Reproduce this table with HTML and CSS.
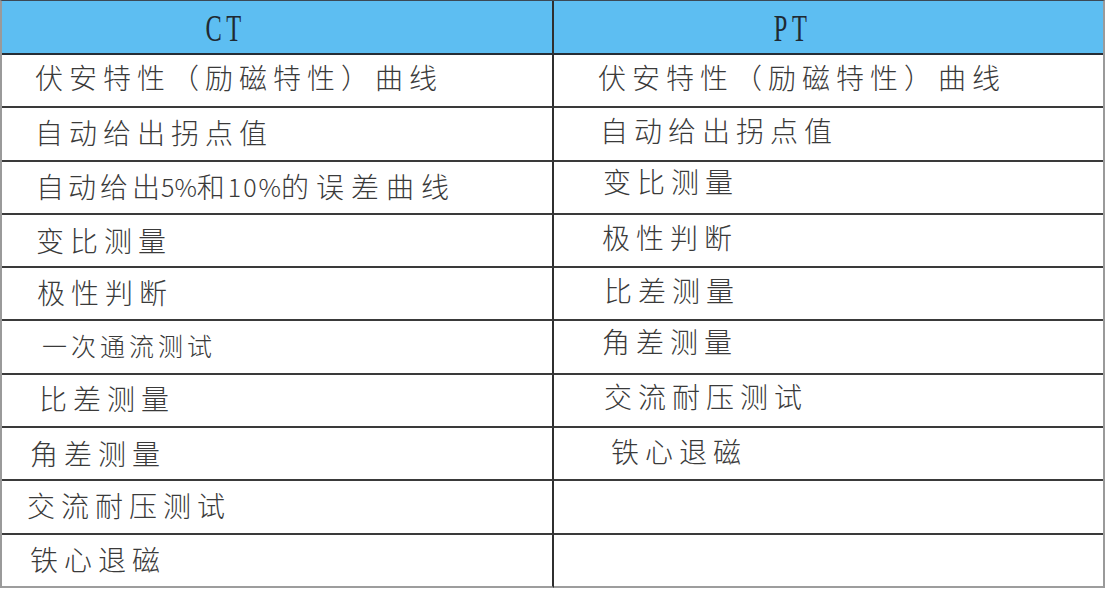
FILE: index.html
```html
<!DOCTYPE html>
<html lang="zh-CN">
<head>
<meta charset="utf-8">
<title>CT / PT 功能对照表</title>
<link rel="stylesheet" href="styles.css">
</head>
<body>
<div class="table">
  <div class="cell head l"><span class="head-text">CT</span></div>
  <div class="cell head r pt"><span class="head-text">PT</span></div>

  <div class="cell l in-33 up-2">伏安特性（励磁特性）曲线</div>
  <div class="cell r in-44">伏安特性（励磁特性）曲线</div>

  <div class="cell l in-33">自动给出拐点值</div>
  <div class="cell r in-46">自动给出拐点值</div>

  <div class="cell l in-34 dn-1 mixed">自动给出<span class="num">5%</span>和<span class="num wide">10%</span><span class="tail">的误差曲线</span></div>
  <div class="cell r in-49 up-2">变比测量</div>

  <div class="cell l in-34 dn-1">变比测量</div>
  <div class="cell r in-48">极性判断</div>

  <div class="cell l in-35">极性判断</div>
  <div class="cell r in-50">比差测量</div>

  <div class="cell l in-40 small">一次通流测试</div>
  <div class="cell r in-48 up-2">角差测量</div>

  <div class="cell l in-37">比差测量</div>
  <div class="cell r in-50">交流耐压测试</div>

  <div class="cell l in-28 dn-1">角差测量</div>
  <div class="cell r in-57 dn-1">铁心退磁</div>

  <div class="cell l in-25">交流耐压测试</div>
  <div class="cell r"></div>

  <div class="cell l in-28 dn-1 last">铁心退磁</div>
  <div class="cell r last"></div>
</div>
</body>
</html>
```

FILE: styles.css
```css
html, body {
  margin: 0;
  padding: 0;
  background: #ffffff;
}

body {
  font-family: "Noto Sans CJK SC", "Noto Sans", sans-serif;
  color: #3a3a3a;
}

.table {
  display: grid;
  grid-template-columns: 552px 1fr;
  grid-template-rows: 54px repeat(10, 53.3px);
  width: 1105px;
  box-sizing: border-box;
  border-top: 1px solid #3b4956;
  border-left: 2px solid #9a9a9a;
  border-right: 2px solid #9a9a9a;
}

.cell {
  display: flex;
  align-items: center;
  box-sizing: border-box;
  border-bottom: 2px solid #3a3a3a;
  padding-bottom: 4px;
  font-size: 28px;
  font-weight: 300;
  line-height: 1;
  letter-spacing: 6px;
  white-space: nowrap;
}

.cell.l {
  border-right: 2px solid #2f2f2f;
}

.cell.r {
  padding-bottom: 8px;
}

.cell.last {
  border-bottom: 2px solid #9d9d9d;
}

/* header */
.cell.head {
  background: #5dbef2;
  justify-content: center;
  border-bottom: 2px solid #262e36;
  padding: 0 102px 0 0;
}

.cell.head.pt {
  padding: 0 72px 0 0;
}

.head-text {
  display: inline-block;
  font-family: "Liberation Serif", "Times New Roman", serif;
  font-size: 37px;
  letter-spacing: 7px;
  color: #1f2a33;
  transform: scaleX(0.66);
  margin-top: 2px;
}

/* text indents within the cells */
.in-25 { padding-left: 25px; }
.in-28 { padding-left: 28px; }
.in-33 { padding-left: 33px; }
.in-34 { padding-left: 34px; }
.in-35 { padding-left: 35px; }
.in-37 { padding-left: 37px; }
.in-40 { padding-left: 40px; }
.in-44 { padding-left: 44px; }
.in-46 { padding-left: 46px; }
.in-48 { padding-left: 48px; }
.in-49 { padding-left: 49px; }
.in-50 { padding-left: 50px; }
.in-57 { padding-left: 57px; }

/* small vertical nudges */
.up-2 { padding-bottom: 8px; }
.cell.r.up-2 { padding-bottom: 12px; }
.dn-1 { padding-bottom: 2px; }
.cell.r.dn-1 { padding-bottom: 6px; }

.small {
  font-size: 25px;
  letter-spacing: 4px;
}

/* the mixed CJK / digit row */
.mixed {
  letter-spacing: 4px;
}

.num {
  font-size: 25px;
  letter-spacing: 0;
  margin-left: -3px;
  margin-right: 0;
}

.num.wide {
  letter-spacing: 2px;
  margin-left: -1px;
  margin-right: -2px;
}

.tail {
  letter-spacing: 7px;
}
```
